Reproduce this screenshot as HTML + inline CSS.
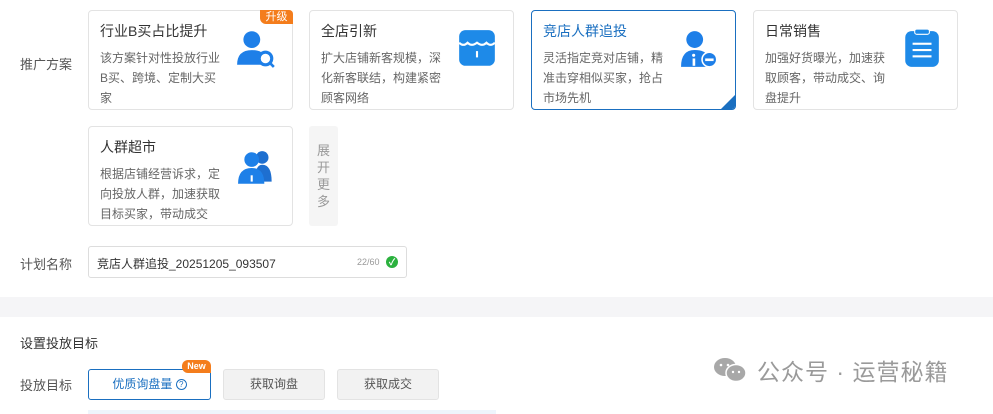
<!DOCTYPE html>
<html><head><meta charset="utf-8"><style>
*{box-sizing:border-box;margin:0;padding:0}
body{width:993px;height:414px;overflow:hidden;background:#fff;font-family:"Liberation Sans","Noto Sans CJK SC",sans-serif;color:#333;position:relative}
.a{position:absolute}
.lbl{font-size:13px;color:#555}
.card{position:absolute;width:205px;height:100px;border:1px solid #e3e3e3;border-radius:4px;background:#fff}
.card .t{position:absolute;left:11px;top:10px;font-size:14px;color:#333}
.card .d{position:absolute;left:11px;top:37px;width:122px;font-size:12px;line-height:20px;color:#666}
.card svg{position:absolute;left:146px;top:18px}
.btn{position:absolute;height:31px;border-radius:3px;font-size:12px;text-align:center;line-height:29px}
</style></head><body>
<div class="a lbl" style="left:20px;top:54px">推广方案</div>

<div class="card" style="left:88px;top:10px">
<div class="t">行业B买占比提升</div>
<div class="d">该方案针对性投放行业B买、跨境、定制大买家</div>
<svg width="42" height="42" viewBox="0 0 40 40" style="left:146px;top:16px"><circle cx="16" cy="12" r="8" fill="#1e7fe8"/><path d="M2 36 Q2 22 16 22 Q26 22 28 28 L28 36Z" fill="#1e7fe8"/><circle cx="29" cy="30" r="6" fill="#fff" stroke="#1e7fe8" stroke-width="3"/><line x1="33" y1="34" x2="37" y2="38" stroke="#1e7fe8" stroke-width="2.5"/></svg>
<div class="a" style="right:-1px;top:-1px;width:33px;height:14px;background:#f47d1c;border-radius:0 4px 0 6px;color:#fff;font-size:11px;line-height:14px;text-align:center">升级</div>
</div>

<div class="card" style="left:309px;top:10px">
<div class="t">全店引新</div>
<div class="d">扩大店铺新客规模，深化新客联结，构建紧密顾客网络</div>
<svg width="42" height="42" viewBox="0 0 40 40" style="left:146px;top:17px"><rect x="3" y="2" width="34" height="34" rx="6" fill="#1e8ae8"/><path d="M3 14 Q7 18 11 14 Q15 18 20 14 Q25 18 29 14 Q33 18 37 14" stroke="#fff" stroke-width="2" fill="none"/><rect x="19" y="22" width="2" height="6" fill="#fff"/></svg>
</div>

<div class="card" style="left:531px;top:10px;border-color:#1a6fc0">
<div class="t" style="color:#1a6fc0">竞店人群追投</div>
<div class="d">灵活指定竞对店铺，精准击穿相似买家，抢占市场先机</div>
<svg width="42" height="42" viewBox="0 0 40 40" style="left:148px;top:17px"><circle cx="14" cy="11" r="8" fill="#1e7fe8"/><path d="M1 37 Q1 21 14 21 Q24 21 27 27 L27 37Z" fill="#1e7fe8"/><circle cx="13" cy="26" r="1.5" fill="#fff"/><rect x="12" y="29" width="2.5" height="7" fill="#fff"/><circle cx="28" cy="30" r="7" fill="#1e7fe8" stroke="#fff" stroke-width="1.5"/><rect x="24" y="29" width="8" height="2.5" fill="#fff"/></svg>
<div class="a" style="right:0;bottom:0;width:0;height:0;border-left:14px solid transparent;border-bottom:14px solid #1a6fc0;border-radius:0 0 3px 0"></div>
</div>

<div class="card" style="left:753px;top:10px">
<div class="t">日常销售</div>
<div class="d">加强好货曝光，加速获取顾客，带动成交、询盘提升</div>
<svg width="42" height="42" viewBox="0 0 40 40" style="left:146px;top:17px"><rect x="5" y="3" width="32" height="34" rx="6" fill="#1e8ae8"/><rect x="14" y="1" width="14" height="5" rx="2" fill="#1e8ae8" stroke="#fff" stroke-width="1"/><rect x="12" y="14" width="18" height="2" fill="#fff"/><rect x="12" y="20" width="18" height="2" fill="#fff"/><rect x="12" y="26" width="18" height="2" fill="#fff"/></svg>
</div>

<div class="card" style="left:88px;top:126px">
<div class="t">人群超市</div>
<div class="d">根据店铺经营诉求，定向投放人群，加速获取目标买家，带动成交</div>
<svg width="42" height="42" viewBox="0 0 40 40" style="left:148px;top:21px"><circle cx="24" cy="9" r="6" fill="#1e6fd0"/><path d="M17 32 Q17 16 24 16 Q33 16 33 32Z" fill="#1e6fd0"/><circle cx="14" cy="11" r="7" fill="#1e80e8"/><path d="M1 34 Q1 19 14 19 Q26 19 26 34Z" fill="#1e80e8"/><rect x="13" y="26" width="2" height="6" fill="#fff"/></svg>
</div>
<div class="a" style="left:309px;top:126px;width:29px;height:100px;background:#f5f5f5;border-radius:3px;color:#999;font-size:13px;line-height:17px;text-align:center;padding-top:16px">展<br>开<br>更<br>多</div>

<div class="a lbl" style="left:20px;top:254px">计划名称</div>
<div class="a" style="left:88px;top:246px;width:319px;height:32px;border:1px solid #ddd;border-radius:3px">
<div class="a" style="left:8px;top:8px;font-size:12px;color:#333">竞店人群追投_20251205_093507</div>
<div class="a" style="left:268px;top:10px;font-size:9px;color:#999">22/60</div>
<div class="a" style="left:297px;top:9px;width:12px;height:12px;border-radius:50%;background:#2bb13e;color:#fff;font-size:9px;line-height:12px;text-align:center;font-weight:bold">✓</div>
</div>

<div class="a" style="left:0;top:297px;width:993px;height:20px;background:#f5f5f7"></div>

<div class="a" style="left:20px;top:333px;font-size:13px;color:#333">设置投放目标</div>
<div class="a lbl" style="left:20px;top:375px">投放目标</div>
<div class="btn" style="left:88px;top:369px;width:123px;border:1px solid #1a6fc0;color:#1a6fc0">优质询盘量 <span style="display:inline-block;width:11px;height:11px;border:1px solid #1a6fc0;border-radius:50%;font-size:8px;line-height:9px;vertical-align:1px">?</span></div>
<div class="a" style="left:182px;top:360px;width:29px;height:13px;background:#f47d1c;border-radius:6px 6px 0 6px;color:#fff;font-size:9px;font-weight:bold;line-height:13px;text-align:center">New</div>
<div class="btn" style="left:223px;top:369px;width:102px;background:#f2f2f2;border:1px solid #e3e3e3;color:#555">获取询盘</div>
<div class="btn" style="left:337px;top:369px;width:102px;background:#f2f2f2;border:1px solid #e3e3e3;color:#555">获取成交</div>
<div class="a" style="left:88px;top:410px;width:408px;height:4px;background:#eef5fc"></div>

<svg class="a" style="left:713px;top:357px" width="36" height="26" viewBox="0 0 36 26"><ellipse cx="12" cy="10" rx="11" ry="9" fill="#a8a8a8"/><ellipse cx="23" cy="16" rx="10" ry="8.5" fill="#a8a8a8" stroke="#fff" stroke-width="1.5"/><circle cx="8" cy="8" r="1.3" fill="#fff"/><circle cx="15" cy="8" r="1.3" fill="#fff"/><circle cx="20" cy="15" r="1.2" fill="#fff"/><circle cx="26" cy="15" r="1.2" fill="#fff"/></svg>
<div class="a" style="left:757px;top:353px;font-size:23px;color:#9a9a9a;letter-spacing:1px">公众号 · 运营秘籍</div>
</body></html>
